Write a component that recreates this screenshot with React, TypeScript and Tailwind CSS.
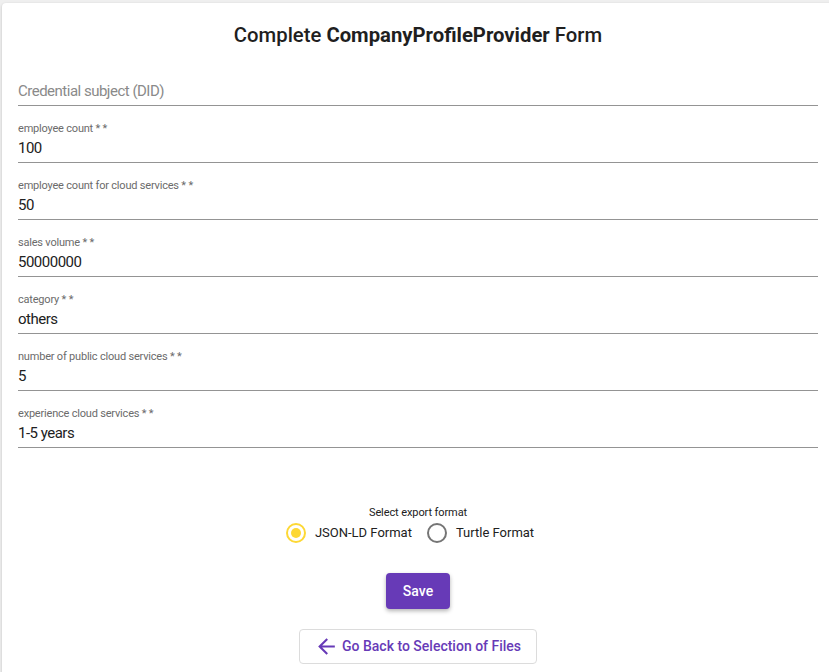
const fields = [
  { label: "employee count * *", value: "100" },
  { label: "employee count for cloud services * *", value: "50" },
  { label: "sales volume * *", value: "50000000" },
  { label: "category * *", value: "others" },
  { label: "number of public cloud services * *", value: "5" },
  { label: "experience cloud services * *", value: "1-5 years" },
];

function Field({ label, value }: { label?: string; value?: string }) {
  return (
    <div className="mt-4 border-b border-[#949494] pb-[4px]">
      <div className="h-[14px] text-[11px] leading-[14px] tracking-[-0.2px] text-[#6b6b6b]">{label}</div>
      <div className="mt-[3px] text-[15px] leading-[19px] tracking-[-0.5px]">
        {value ? (
          <span className="text-[#212121]">{value}</span>
        ) : (
          <span className="text-[#8a8a8a]">Credential subject (DID)</span>
        )}
      </div>
    </div>
  );
}

export default function App() {
  return (
    <div className="w-[829px] h-[672px] overflow-hidden bg-[#efefef] pl-[2px] pt-[3px] font-['Roboto',sans-serif]">
      <div className="w-[832px] min-h-[680px] rounded bg-white px-4 pt-[18px] shadow-[0_1px_3px_rgba(0,0,0,0.2)]">
        {/* Title */}
        <h2 className="text-center text-[20.3px] leading-[28px] font-medium text-[#1f1f1f]">
          Complete <span className="font-bold">CompanyProfileProvider</span> Form
        </h2>

        <div>
          <Field />
          {fields.map((f) => (
            <Field key={f.label} label={f.label} value={f.value} />
          ))}
        </div>

        {/* Export format */}
        <div className="mt-[58px] flex flex-col items-center">
          <div className="text-[11px] leading-[14px] tracking-[-0.1px] text-[#212121]">Select export format</div>
          <div className="mt-[3px] flex items-center gap-[11px]">
            <label className="flex items-center gap-[9px]">
              <span className="flex h-[20px] w-[20px] items-center justify-center rounded-full border-2 border-[#fdd835]">
                <span className="h-[10px] w-[10px] rounded-full bg-[#fdd835]" />
              </span>
              <span className="text-[13px] leading-[20px] text-[#212121]">JSON-LD Format</span>
            </label>
            <label className="ml-[4px] mr-[16px] flex items-center gap-[9px]">
              <span className="h-[20px] w-[20px] rounded-full border-2 border-[#757575]" />
              <span className="text-[13px] leading-[20px] text-[#212121]">Turtle Format</span>
            </label>
          </div>

          <button className="mt-[30px] h-[36px] w-[64px] rounded bg-[#673ab7] text-[14px] font-medium text-white shadow-[0_2px_4px_rgba(0,0,0,0.3)]">
            Save
          </button>

          <button className="mt-[20px] flex h-[35px] w-[238px] items-center gap-[3px] rounded border border-[#dcdcdc] bg-white pl-[14px] text-[14px] font-medium text-[#673ab7]">
            <svg width="25" height="25" viewBox="0 0 24 24" fill="currentColor">
              <path d="M20 11H7.83l5.59-5.59L12 4l-8 8 8 8 1.41-1.41L7.83 13H20v-2z" />
            </svg>
            Go Back to Selection of Files
          </button>
        </div>
      </div>
    </div>
  );
}
